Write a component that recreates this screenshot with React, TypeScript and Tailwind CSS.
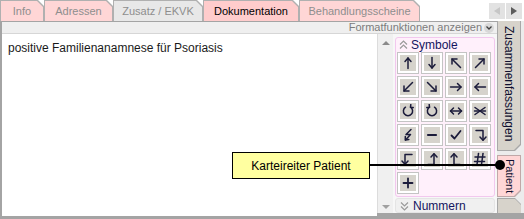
import React from "react";

type Seg = { d: string; w?: number };

const icons: Seg[][] = [
  [{ d: "M7 12.5V2" }, { d: "M4 5.5L7 2L10 5.5" }],
  [{ d: "M7 1.5V12" }, { d: "M4 8.5L7 12L10 8.5" }],
  [{ d: "M11.5 11.5L3 3" }, { d: "M3 8L3 3L8 3" }],
  [{ d: "M2.5 11.5L11 3" }, { d: "M6 3L11 3L11 8" }],
  [{ d: "M11.5 2.5L3 11" }, { d: "M3 6L3 11L8 11" }],
  [{ d: "M2.5 2.5L11 11" }, { d: "M11 6L11 11L6 11" }],
  [{ d: "M1.5 7H12" }, { d: "M8.5 3.5L12 7L8.5 10.5" }],
  [{ d: "M12.5 7H2" }, { d: "M5.5 3.5L2 7L5.5 10.5" }],
  [{ d: "M4.5 3.2A4.6 4.6 0 1 0 9.5 3.2" }, { d: "M9.8 0.6L9.5 3.2L12.2 3.6" }],
  [{ d: "M9.5 3.2A4.6 4.6 0 1 1 4.5 3.2" }, { d: "M4.2 0.6L4.5 3.2L1.8 3.6" }],
  [{ d: "M1.5 7H12.5" }, { d: "M4.5 4L1.5 7L4.5 10" }, { d: "M9.5 4L12.5 7L9.5 10" }],
  [{ d: "M1.5 7H12.5" }, { d: "M2 3.5L7 7L2 10.5" }, { d: "M12 3.5L7 7L12 10.5" }],
  [{ d: "M10 1.5L5 6.5H9.5L4.5 12" }, { d: "M4.3 8.5L4.3 12L7.8 11.5" }],
  [{ d: "M3 7H11", w: 2.2 }],
  [{ d: "M2.5 7.5L5.5 10.5L11.5 3", w: 1.8 }],
  [{ d: "M3 2.5H10V12" }, { d: "M7 9L10 12.2L13 9" }],
  [{ d: "M11 2.5H4V12" }, { d: "M1 9L4 12.2L7 9" }],
  [{ d: "M9 12.5V2" }, { d: "M3 12.5H9" }, { d: "M6 5L9 1.8L12 5" }],
  [{ d: "M5 12.5V2" }, { d: "M5 12.5H11" }, { d: "M2 5L5 1.8L8 5" }],
  [{ d: "M5.5 1.5L4 12.5" }, { d: "M10 1.5L8.5 12.5" }, { d: "M2 5H12" }, { d: "M1.5 9.5H11.5" }],
  [{ d: "M7 2.5V11.5", w: 1.8 }, { d: "M2.5 7H11.5", w: 1.8 }],
];

function SymButton({ segs }: { segs: Seg[] }) {
  return (
    <div className="w-[22px] h-[22px] border border-[#c4c4c4] bg-white p-[2px]">
      <div className="w-full h-full bg-[#d6d3cc] flex items-center justify-center">
        <svg width="14" height="14" viewBox="0 0 14 14" fill="none" stroke="#1b1b3a" strokeLinecap="round" strokeLinejoin="round">
          {segs.map((s, i) => (
            <path key={i} d={s.d} strokeWidth={s.w ?? 1.5} />
          ))}
        </svg>
      </div>
    </div>
  );
}

function Tab({ label, width, fill, active }: { label: string; width: string; fill: string; active?: boolean }) {
  return (
    <div className={`${width} h-[21px] bg-[#b0b0b0] px-px pt-px [clip-path:polygon(0_0,calc(100%_-_6px)_0,100%_6px,100%_100%,0_100%)]`}>
      <div
        className={`${fill} h-full flex items-center justify-center text-[11px] leading-none ${active ? "text-black" : "text-[#8e8e8e]"} [clip-path:polygon(0_0,calc(100%_-_6px)_0,100%_6px,100%_100%,0_100%)]`}
      >
        {label}
      </div>
    </div>
  );
}

function DoubleChevron({ up }: { up?: boolean }) {
  return (
    <svg width="9" height="10" viewBox="0 0 9 10" fill="none" stroke="#9a9a9a" strokeWidth="1.2">
      {up ? (
        <>
          <path d="M1 4.5L4.5 1L8 4.5" />
          <path d="M1 8.5L4.5 5L8 8.5" />
        </>
      ) : (
        <>
          <path d="M1 1.5L4.5 5L8 1.5" />
          <path d="M1 5.5L4.5 9L8 5.5" />
        </>
      )}
    </svg>
  );
}

export default function App() {
  return (
    <div className="relative w-[524px] h-[219px] overflow-hidden bg-white font-['Liberation_Sans',Arial,sans-serif]">
      {/* top tabs */}
      <div className="flex h-[21px] items-start">
        <Tab label="Info" width="w-[44px]" fill="bg-[#ffd6d6]" />
        <Tab label="Adressen" width="w-[69px]" fill="bg-[#ffd6d6]" />
        <Tab label="Zusatz / EKVK" width="w-[90px]" fill="bg-[#e8e8e8]" />
        <Tab label="Dokumentation" width="w-[96px]" fill="bg-[#ffcccc]" active />
        <Tab label="Behandlungsscheine" width="w-[121px]" fill="bg-[#ffd6d6]" />
        <div className="flex-1" />
        <div className="mt-[3px] mr-[2px] flex h-[16px] bg-[#e2e2e2]">
          <div className="w-[16px] flex items-center justify-center">
            <svg width="6" height="8" viewBox="0 0 6 8"><path d="M6 0L0 4L6 8Z" fill="#c6c6c6" /></svg>
          </div>
          <div className="w-px bg-white" />
          <div className="w-[16px] flex items-center justify-center">
            <svg width="6" height="8" viewBox="0 0 6 8"><path d="M0 0L6 4L0 8Z" fill="#5c5c5c" /></svg>
          </div>
        </div>
      </div>

      {/* body */}
      <div className="flex h-[195px]">
        <div className="w-[497px] flex flex-col border-l-2 border-t border-[#a4a4a4]">
          <div className="h-[11px] bg-[#efefef] flex items-center justify-end pr-[3px] gap-[2px]">
            <span className="text-[11px] leading-none text-[#7c7c7c]">Formatfunktionen anzeigen</span>
            <span className="w-[10px] h-[10px] rounded-full bg-[#d8d8d8] flex items-center justify-center">
              <svg width="6" height="4" viewBox="0 0 6 4" fill="none" stroke="#404040" strokeWidth="1.3">
                <path d="M0.5 0.5L3 3L5.5 0.5" />
              </svg>
            </span>
          </div>
          <div className="flex-1 flex border-t border-[#d6d6d6]">
            <div className="w-[375px] bg-white pl-[6px] pt-[7px] text-[12px] leading-[14px] text-[#1a1a1a]">
              positive Familienanamnese für Psoriasis
            </div>
            <div className="flex-1 flex border-b-[3px] border-[#a4a4a4]">
              <div className="w-[16px] bg-[#f0f0f0] border-l border-[#dcdcdc] flex flex-col items-center justify-between pt-[7px] pb-[4px]">
                <svg width="8" height="4" viewBox="0 0 8 4"><path d="M0 4L4 0L8 4Z" fill="#8a8a8a" /></svg>
                <svg width="8" height="4" viewBox="0 0 8 4"><path d="M0 0L4 4L8 0Z" fill="#a0a0a0" /></svg>
              </div>
              <div className="flex-1 bg-[#f7f7f7] pl-[2px] pr-[2px] pt-[3px] flex flex-col gap-[1px]">
                <div className="h-[160px] bg-[#fff0fb] border border-[#f2c8ee] rounded-[3px] px-[1px]">
                  <div className="flex items-center gap-[3px] h-[14px] pl-[2px]">
                    <DoubleChevron up />
                    <span className="text-[12px] leading-none text-[#141460]">Symbole</span>
                  </div>
                  <div className="grid grid-cols-[repeat(4,22px)] gap-[2px]">
                    {icons.map((s, i) => (
                      <SymButton key={i} segs={s} />
                    ))}
                  </div>
                </div>
                <div className="h-[15px] bg-[#f0f0f0] border border-[#e4e4e4] rounded-[3px] flex items-center gap-[4px] pl-[4px]">
                  <DoubleChevron />
                  <span className="text-[12px] leading-none text-[#141460]">Nummern</span>
                </div>
              </div>
            </div>
          </div>
        </div>

        {/* right vertical tabs */}
        <div className="flex-1 flex flex-col bg-[#ececec] pr-[3px] border-b-[3px] border-[#a4a4a4]">
          <div className="h-[130px] bg-[#a8a8a8] pl-px pr-px pb-px [clip-path:polygon(0_0,100%_0,100%_calc(100%_-_6px),calc(100%_-_6px)_100%,0_100%)]">
            <div className="h-full bg-[#d7d3cb] flex justify-center pt-[5px] [clip-path:polygon(0_0,100%_0,100%_calc(100%_-_6px),calc(100%_-_6px)_100%,0_100%)]">
              <span className="[writing-mode:vertical-rl] text-[12px] leading-none text-[#101030]">Zusammenfassungen</span>
            </div>
          </div>
          <div className="h-[4px]" />
          <div className="h-[42px] bg-[#c0a8a8] pl-px pr-px pb-px pt-px [clip-path:polygon(0_0,100%_0,100%_calc(100%_-_6px),calc(100%_-_6px)_100%,0_100%)]">
            <div className="h-full bg-[#ffd6d6] flex justify-center pt-[3px] [clip-path:polygon(0_0,100%_0,100%_calc(100%_-_6px),calc(100%_-_6px)_100%,0_100%)]">
              <span className="[writing-mode:vertical-rl] text-[11px] leading-none text-[#101030]">Patient</span>
            </div>
          </div>
          <div className="flex-1 mt-[1px] bg-[#a8a8a8] pl-px pt-px [clip-path:polygon(0_0,calc(100%_-_6px)_0,100%_6px,100%_100%,0_100%)]">
            <div className="h-full bg-[#d7d3cb] [clip-path:polygon(0_0,calc(100%_-_6px)_0,100%_6px,100%_100%,0_100%)]" />
          </div>
        </div>
      </div>

      <div className="h-[3px] bg-[#a4a4a4]" />

      {/* annotation */}
      <div className="absolute left-[232px] top-[152px] w-[138px] h-[27px] bg-[#ffffa0] border border-black flex items-center justify-center text-[12px] text-black">
        Karteireiter Patient
      </div>
      <div className="absolute left-[370px] top-[164px] w-[130px] h-[2px] bg-black" />
      <div className="absolute left-[495px] top-[160px] w-[10px] h-[10px] rounded-full bg-black" />
    </div>
  );
}
